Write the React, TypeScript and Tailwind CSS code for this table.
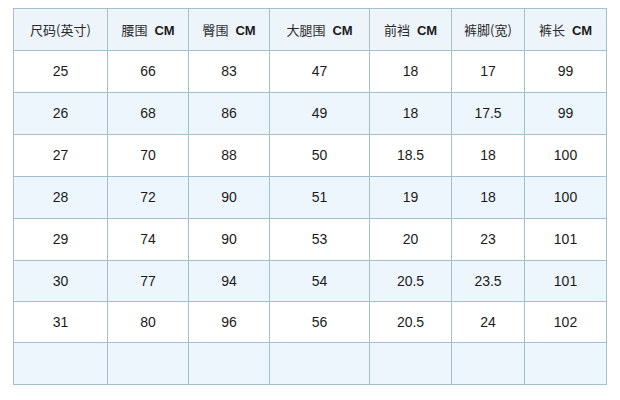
import React from 'react';

const headers: { zh: string; cm?: boolean }[] = [
  { zh: '尺码(英寸)' },
  { zh: '腰围', cm: true },
  { zh: '臀围', cm: true },
  { zh: '大腿围', cm: true },
  { zh: '前裆', cm: true },
  { zh: '裤脚(宽)' },
  { zh: '裤长', cm: true },
];

const rows: string[][] = [
  ['25', '66', '83', '47', '18', '17', '99'],
  ['26', '68', '86', '49', '18', '17.5', '99'],
  ['27', '70', '88', '50', '18.5', '18', '100'],
  ['28', '72', '90', '51', '19', '18', '100'],
  ['29', '74', '90', '53', '20', '23', '101'],
  ['30', '77', '94', '54', '20.5', '23.5', '101'],
  ['31', '80', '96', '56', '20.5', '24', '102'],
  ['', '', '', '', '', '', ''],
];

const rowHeights = ['h-[42px]', 'h-[42px]', 'h-[42px]', 'h-[42px]', 'h-[42px]', 'h-[41px]', 'h-[41px]', 'h-[42px]'];

export default function App() {
  return (
    <div className="w-[620px] h-[400px] bg-white pt-[8px] pl-[13px]">
      <table className="table-fixed border-collapse w-[593px] border border-[#9fb9c8] text-[14px] text-[#1a1a1a]">
        <colgroup>
          <col className="w-[94px]" />
          <col className="w-[81px]" />
          <col className="w-[81px]" />
          <col className="w-[100px]" />
          <col className="w-[82px]" />
          <col className="w-[73px]" />
          <col className="w-[82px]" />
        </colgroup>
        <thead>
          <tr className="h-[42px] bg-[#edf5fb]">
            {headers.map((h, i) => (
              <th key={i} className="border border-[#a6bfcd] p-0 font-normal text-center whitespace-nowrap">
                <span className="font-['Noto_Sans_CJK_SC',serif] text-[13px] text-[#2a2a2a]">{h.zh}</span>
                {h.cm && (
                  <span className="font-['Liberation_Sans',Arial,sans-serif] font-bold text-[13px] text-[#1a1a1a] ml-[7px]">
                    CM
                  </span>
                )}
              </th>
            ))}
          </tr>
        </thead>
        <tbody className="font-['Liberation_Sans',Arial,sans-serif]">
          {rows.map((r, i) => (
            <tr key={i} className={`${rowHeights[i]} ${i % 2 === 1 ? 'bg-[#eef6fd]' : 'bg-white'}`}>
              {r.map((c, j) => (
                <td key={j} className="border border-[#a6bfcd] p-0 text-center">
                  {c}
                </td>
              ))}
            </tr>
          ))}
        </tbody>
      </table>
    </div>
  );
}
